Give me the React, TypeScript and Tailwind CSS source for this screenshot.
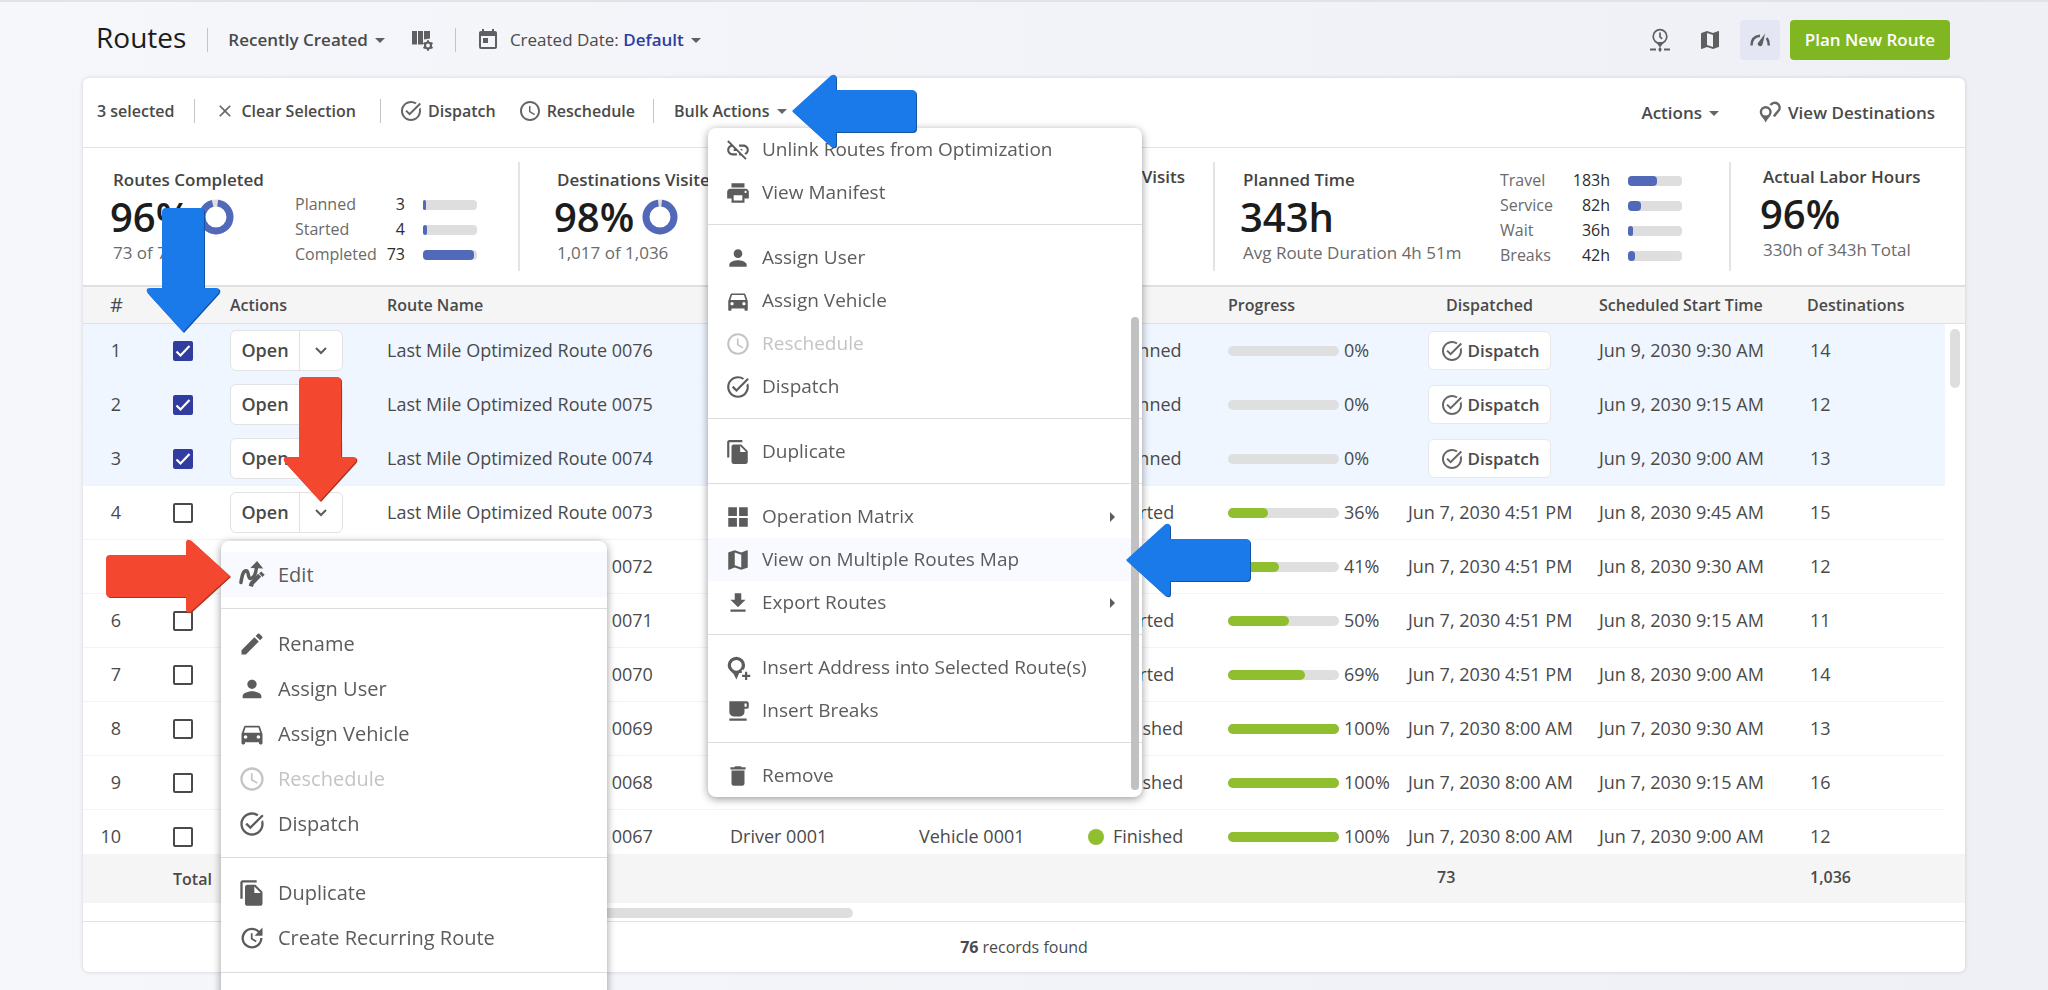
import React from 'react';
import clsx from 'clsx';
import {
  MdAccessTime,
  MdArrowDropDown,
  MdArrowRight,
  MdClose,
  MdDelete,
  MdDirectionsCar,
  MdEdit,
  MdFileCopy,
  MdFileDownload,
  MdFreeBreakfast,
  MdLinkOff,
  MdMap,
  MdPerson,
  MdPrint,
  MdTaskAlt,
  MdToday,
  MdUpdate,
} from 'react-icons/md';

type IconType = React.ComponentType<{ className?: string }>;

const GridIcon: IconType = ({ className }) => (
  <svg viewBox="0 0 24 24" className={className} fill="currentColor">
    <path d="M3 3h8v8H3zM13 3h8v8h-8zM3 13h8v8H3zM13 13h8v8h-8z" />
  </svg>
);

const ColumnsGearIcon: IconType = ({ className }) => (
  <svg viewBox="0 0 24 24" className={className} fill="currentColor">
    <path d="M2 3h5v13.500H2zM8 3h5v13.500H8zM14 3h6v7.500l-6 1z" />
    <circle cx="18" cy="17.500" r="3" fill="none" stroke="currentColor" strokeWidth="2.200" />
    <path
      d="M18 12.300v2M18 20.700v2M13.500 14.900l1.700 1M20.800 19.100l1.700 1M13.500 20.100l1.700-1M20.800 15.900l1.700-1"
      stroke="currentColor"
      strokeWidth="2"
    />
  </svg>
);

const TimelinePinIcon: IconType = ({ className }) => (
  <svg viewBox="0 0 24 24" className={className} fill="none" stroke="currentColor" strokeWidth="1.700">
    <circle cx="12" cy="8.500" r="6.800" />
    <path d="M12 4.500v4.300l2.200 2" />
    <path d="M9.500 14.800L12 18l2.500-3.200z" fill="currentColor" />
    <path d="M2 21.500h6M16 21.500h6M12 19.500v4M10.500 21.500h3" strokeWidth="2" />
  </svg>
);

const GaugeIcon: IconType = ({ className }) => (
  <svg viewBox="0 0 24 24" className={className} fill="none" stroke="currentColor" strokeWidth="2.400">
    <path d="M3.500 17.500c0-5.500 3-9.300 8.500-9.800" />
    <path d="M18.800 10c1.300 2 2 4.500 2 7.500" />
    <path d="M17.200 5.500l-2.700 11a2.400 2.400 0 0 1-4.600-1.500z" fill="currentColor" stroke="none" />
  </svg>
);

const PinsIcon: IconType = ({ className }) => (
  <svg viewBox="0 0 24 24" className={className} fill="currentColor">
    <path
      fillRule="evenodd"
      d="M7.700 5a6 6 0 0 1 6 6c0 3-2.500 5-4.300 7.500l-1.700 3-1.700-3C4.200 16 1.700 14 1.700 11a6 6 0 0 1 6-6zM7.700 7.400a3.600 3.600 0 1 0 0 7.200 3.600 3.600 0 0 0 0-7.200z"
    />
    <path d="M12.500 4.200a4.900 4.900 0 1 1 7.800 5.800c-1.200 1.500-3 3-4.300 5.500" fill="none" stroke="currentColor" strokeWidth="2.400" />
  </svg>
);

const PinPlusIcon: IconType = ({ className }) => (
  <svg viewBox="0 0 24 24" className={className} fill="currentColor">
    <path
      fillRule="evenodd"
      d="M10.500 1.500a8 8 0 0 1 8 8c0 1.600-.5 3-1.300 4.200h-1.700v3h-2.300L10.500 22.500l-2.700-5.300C5 14.800 2.500 13 2.500 9.500a8 8 0 0 1 8-8zM10.500 4.500a5 5 0 1 0 0 10 5 5 0 0 0 0-10z"
    />
    <path d="M19.500 15.500v7.500M15.800 19.200h7.500" stroke="currentColor" strokeWidth="2" />
  </svg>
);

const RouteEditIcon: IconType = ({ className }) => (
  <svg viewBox="0 0 24 24" className={className} fill="none" stroke="currentColor">
    <path
      d="M2.500 18.500C3.500 12 4.500 8.300 7 8.300s1.200 6.700 3.700 6.700c2.800 0 4.500-3.500 5.300-10"
      strokeWidth="3"
      strokeLinecap="round"
    />
    <path d="M11.800 5.500L16.300.8l4.200 5z" fill="currentColor" />
    <path d="M11 21.800l.8-2.700 6.700-6.900" strokeWidth="3.800" />
    <path d="M19.500 12.300l1.900-1.900" strokeWidth="4.200" />
  </svg>
);

interface MenuEntry {
  label: string;
  icon: IconType;
  disabled?: boolean;
  active?: boolean;
  submenu?: boolean;
}

const bulkMenu: MenuEntry[][] = [
  [
    { label: 'Unlink Routes from Optimization', icon: MdLinkOff },
    { label: 'View Manifest', icon: MdPrint },
  ],
  [
    { label: 'Assign User', icon: MdPerson },
    { label: 'Assign Vehicle', icon: MdDirectionsCar },
    { label: 'Reschedule', icon: MdAccessTime, disabled: true },
    { label: 'Dispatch', icon: MdTaskAlt },
  ],
  [{ label: 'Duplicate', icon: MdFileCopy }],
  [
    { label: 'Operation Matrix', icon: GridIcon, submenu: true },
    { label: 'View on Multiple Routes Map', icon: MdMap, active: true },
    { label: 'Export Routes', icon: MdFileDownload, submenu: true },
  ],
  [
    { label: 'Insert Address into Selected Route(s)', icon: PinPlusIcon },
    { label: 'Insert Breaks', icon: MdFreeBreakfast },
  ],
  [{ label: 'Remove', icon: MdDelete }],
];

const rowMenu: MenuEntry[][] = [
  [{ label: 'Edit', icon: RouteEditIcon, active: true }],
  [
    { label: 'Rename', icon: MdEdit },
    { label: 'Assign User', icon: MdPerson },
    { label: 'Assign Vehicle', icon: MdDirectionsCar },
    { label: 'Reschedule', icon: MdAccessTime, disabled: true },
    { label: 'Dispatch', icon: MdTaskAlt },
  ],
  [
    { label: 'Duplicate', icon: MdFileCopy },
    { label: 'Create Recurring Route', icon: MdUpdate },
  ],
];

interface RouteRow {
  id: number;
  name: string;
  status: 'Planned' | 'Started' | 'Finished';
  progress: number;
  bar: number;
  dispatched?: string;
  start: string;
  destinations: number;
}

const routes: RouteRow[] = [
  { id: 1, name: 'Last Mile Optimized Route 0076', status: 'Planned', progress: 0, bar: 0, start: 'Jun 9, 2030 9:30 AM', destinations: 14 },
  { id: 2, name: 'Last Mile Optimized Route 0075', status: 'Planned', progress: 0, bar: 0, start: 'Jun 9, 2030 9:15 AM', destinations: 12 },
  { id: 3, name: 'Last Mile Optimized Route 0074', status: 'Planned', progress: 0, bar: 0, start: 'Jun 9, 2030 9:00 AM', destinations: 13 },
  { id: 4, name: 'Last Mile Optimized Route 0073', status: 'Started', progress: 36, bar: 36, dispatched: 'Jun 7, 2030 4:51 PM', start: 'Jun 8, 2030 9:45 AM', destinations: 15 },
  { id: 5, name: 'Last Mile Optimized Route 0072', status: 'Started', progress: 41, bar: 46, dispatched: 'Jun 7, 2030 4:51 PM', start: 'Jun 8, 2030 9:30 AM', destinations: 12 },
  { id: 6, name: 'Last Mile Optimized Route 0071', status: 'Started', progress: 50, bar: 55, dispatched: 'Jun 7, 2030 4:51 PM', start: 'Jun 8, 2030 9:15 AM', destinations: 11 },
  { id: 7, name: 'Last Mile Optimized Route 0070', status: 'Started', progress: 69, bar: 69, dispatched: 'Jun 7, 2030 4:51 PM', start: 'Jun 8, 2030 9:00 AM', destinations: 14 },
  { id: 8, name: 'Last Mile Optimized Route 0069', status: 'Finished', progress: 100, bar: 100, dispatched: 'Jun 7, 2030 8:00 AM', start: 'Jun 7, 2030 9:30 AM', destinations: 13 },
  { id: 9, name: 'Last Mile Optimized Route 0068', status: 'Finished', progress: 100, bar: 100, dispatched: 'Jun 7, 2030 8:00 AM', start: 'Jun 7, 2030 9:15 AM', destinations: 16 },
  { id: 10, name: 'Last Mile Optimized Route 0067', status: 'Finished', progress: 100, bar: 100, dispatched: 'Jun 7, 2030 8:00 AM', start: 'Jun 7, 2030 9:00 AM', destinations: 12 },
];

const selectedIds = [1, 2, 3];

const Divider: React.FC<{ className?: string }> = ({ className }) => (
  <div className={clsx('w-px h-6 bg-[#c4c4c6]', className)} />
);

const Menu: React.FC<{ groups: MenuEntry[][]; large?: boolean }> = ({ groups, large }) => (
  <div role="menu">
    {groups.map((group, i) => (
      <div
        key={i}
        className={clsx(i > 0 && 'border-t border-[#dcdcdc]', i > 0 && (large ? 'mt-[11px] pt-3' : 'mt-2.5 pt-[11px]'))}
      >
        {group.map(({ label, icon: Icon, disabled, active, submenu }) => (
          <button
            key={label}
            role="menuitem"
            disabled={disabled}
            className={clsx(
              'w-full flex items-center text-left',
              large ? 'h-[45px] pl-[17px] gap-3 text-[20px]' : 'h-[43px] pl-[17px] pr-[18px] gap-[11px] text-[19px]',
              active && 'bg-[#f8faff]',
              disabled ? 'text-[#c4c4c4]' : 'text-[#5c5c5c]'
            )}
          >
            <Icon className={clsx('shrink-0', large ? 'w-7 h-7' : 'w-[26px] h-[26px]')} />
            <span className="flex-1 whitespace-nowrap">{label}</span>
            {submenu && <MdArrowRight className="w-6 h-6" />}
          </button>
        ))}
      </div>
    ))}
  </div>
);

const Donut: React.FC<{ percent: number }> = ({ percent }) => (
  <svg viewBox="0 0 36 36" className="w-9 h-9 -rotate-90">
    <circle cx="18" cy="18" r="14" fill="none" stroke="#dedede" strokeWidth="7" />
    <circle
      cx="18"
      cy="18"
      r="14"
      fill="none"
      stroke="#5268b8"
      strokeWidth="7"
      pathLength={100}
      strokeDasharray={`${percent - 2} 100`}
      strokeDashoffset="-2"
    />
  </svg>
);

interface StatLine {
  label: string;
  value: string;
  percent: number;
}

const StatLines: React.FC<{ lines: StatLine[] }> = ({ lines }) => (
  <dl className="text-[16px] leading-[25px]">
    {lines.map(line => (
      <div key={line.label} className="flex items-center">
        <dt className="w-[82px] text-[#6a6a6a]">{line.label}</dt>
        <dd className="w-7 flex justify-end text-[#2c2c2c]">{line.value}</dd>
        <dd className="ml-[18px] w-[54px] h-2.5 rounded-sm bg-[#dedede]">
          <div className="h-full rounded-sm bg-[#5268b8]" style={{ width: `${line.percent}%` }} />
        </dd>
      </div>
    ))}
  </dl>
);

interface StatProps {
  title: string;
  value: string;
  note: string;
  donut?: number;
}

const Stat: React.FC<StatProps> = ({ title, value, note, donut }) => (
  <div>
    <h2 className="text-[17px] leading-6 font-semibold text-[#444]">{title}</h2>
    <div className="h-[49px] flex items-center gap-2 -ml-[3px]">
      <span className="text-[40px] leading-[48px] font-semibold text-[#1c1c1c]">{value}</span>
      {donut && <Donut percent={donut} />}
    </div>
    <p className="text-[17px] leading-6 text-[#6a6a6a]">{note}</p>
  </div>
);

const Arrow: React.FC<{ color: string; direction: 'left' | 'right' | 'down'; className: string }> = ({
  color,
  direction,
  className,
}) => (
  <svg
    viewBox={direction === 'down' ? '0 0 74 125' : '0 0 125 74'}
    className={clsx('absolute z-20 overflow-visible', direction === 'down' ? 'w-[74px] h-[125px]' : 'w-[125px] h-[74px]', className)}
  >
    {[true, false].map(edge => (
      <g key={String(edge)} transform={edge ? 'translate(1 1)' : undefined}>
        <path
          d="M1 37L40 1.500Q45 -1 45 4V16H121Q125 16 125 20V54Q125 58 121 58H45V70Q45 75 40 72.500Z"
          transform={
            direction === 'right' ? 'translate(125 0) scale(-1 1)' : direction === 'down' ? 'translate(0 125) rotate(-90)' : undefined
          }
          fill={color}
          style={edge ? { filter: 'brightness(0.7)' } : undefined}
        />
      </g>
    ))}
  </svg>
);

const RoutesTable: React.FC = () => (
  <div className="relative">
    <div className="h-[618px] overflow-hidden">
      <table className="w-full table-fixed border-separate border-spacing-0 text-left text-[18px] text-[#4a4a4a]">
        <colgroup>
          <col className="w-[90px]" />
          <col className="w-[57px]" />
          <col className="w-[157px]" />
          <col />
          <col className="w-[189px]" />
          <col className="w-[169px]" />
          <col className="w-[140px]" />
          <col className="w-[180px]" />
          <col className="w-[191px]" />
          <col className="w-[208px]" />
          <col className="w-[138px]" />
          <col className="w-5" />
        </colgroup>
        <thead>
          <tr className="h-[39px] bg-[#f5f5f5] text-[16px] [&>th]:font-semibold [&>th]:border-t-2 [&>th]:border-b [&>th]:border-[#e0e0e0]">
            <th className="pl-[27px]">
              <span className="block text-[20px] leading-6 font-normal">#</span>
            </th>
            <th />
            <th>Actions</th>
            <th>Route Name</th>
            <th>Driver</th>
            <th>Vehicle</th>
            <th>Status</th>
            <th>Progress</th>
            <th className="pr-7 text-center">Dispatched</th>
            <th>Scheduled Start Time</th>
            <th>Destinations</th>
            <th />
          </tr>
        </thead>
        <tbody>
          {routes.map(route => {
            const selected = selectedIds.includes(route.id);
            return (
              <tr
                key={route.id}
                className={clsx(
                  'h-[54px] [&>td:not(:last-child)]:border-b [&>td]:border-[#f3f3f3]',
                  selected && '[&>td:not(:last-child)]:bg-[#eff6ff]'
                )}
              >
                <td className="pr-[52px] text-right">{route.id}</td>
                <td>
                  <input
                    type="checkbox"
                    defaultChecked={selected}
                    aria-label={`Select route ${route.id}`}
                    className="peer block appearance-none w-5 h-5 rounded-xs border-2 border-[#4a4a4a] checked:border-[#303c9f] checked:bg-[#303c9f]"
                  />
                  <svg viewBox="0 0 20 20" className="hidden peer-checked:block w-5 h-5 -mt-5 relative pointer-events-none">
                    <path d="M3.500 10.500l4 4 9-9.500" fill="none" stroke="#fff" strokeWidth="2.200" />
                  </svg>
                </td>
                <td>
                  <div className="w-[113px] h-[41px] flex rounded-md border border-[#e2e2e2] bg-white">
                    <button className="w-[69px] font-semibold border-r border-[#e2e2e2]">Open</button>
                    <button className="flex-1 flex items-center justify-center" aria-label="More actions">
                      <svg viewBox="0 0 12 8" className="w-3 h-2">
                        <path d="M1 1l5 5 5-5" fill="none" stroke="#5c5c5c" strokeWidth="2" />
                      </svg>
                    </button>
                  </div>
                </td>
                <td className="whitespace-nowrap">{route.name}</td>
                <td>Driver 0001</td>
                <td>Vehicle 0001</td>
                <td>
                  <span className="flex items-center gap-[9px]">
                    <span
                      className={clsx('w-4 h-4 rounded-full', route.status === 'Finished' ? 'bg-[#8fbe2e]' : 'bg-[#5268b8]')}
                    />
                    {route.status}
                  </span>
                </td>
                <td>
                  <div className="flex items-center gap-[5px]">
                    <div className="w-[111px] h-2.5 rounded-full bg-[#dfdfdf]">
                      <div className="h-full rounded-full bg-[#8fbe2e]" style={{ width: `${route.bar}%` }} />
                    </div>
                    <span>{route.progress}%</span>
                  </div>
                </td>
                <td className="pr-7 text-center whitespace-nowrap">
                  {route.dispatched ?? (
                    <button className="h-[39px] px-[11px] inline-flex items-center gap-1 align-middle rounded-md border border-[#e8e8e8] bg-white text-[17px] font-semibold">
                      <MdTaskAlt className="w-6 h-6 text-[#666]" />
                      Dispatch
                    </button>
                  )}
                </td>
                <td>{route.start}</td>
                <td className="pl-[3px]">{route.destinations}</td>
                <td />
              </tr>
            );
          })}
        </tbody>
        <tfoot className="sticky bottom-0 z-1">
          <tr className="h-[49px] bg-[#f5f5f5] text-[16px] font-semibold">
            <td />
            <td colSpan={7}>Total</td>
            <td className="pl-[29px] pb-1">73</td>
            <td />
            <td className="pl-[3px] pb-1">1,036</td>
            <td />
          </tr>
        </tfoot>
      </table>
    </div>
    <div className="absolute right-[5px] top-[44px] w-2.5 h-[59px] rounded-full bg-[#dedede]" />
  </div>
);

const App: React.FC = () => {
  return (
    <div
      className="relative h-screen overflow-hidden px-[83px] border-t-2 border-[#e2e3e7] bg-linear-to-r from-[#f6f7fb] to-[#eff0f6] text-[17px] text-[#4a4a4a]"
      style={{ fontFamily: '"Open Sans", "Noto Sans", sans-serif' }}
    >
      <header className="h-[76px] flex items-center pl-[13px] pr-[15px] [&_svg]:text-[#5f5f62]">
        <h1 className="pb-1.5 text-[28px] leading-8 text-[#1c1c1c]">Routes</h1>
        <Divider className="ml-[21px]" />
        <button className="ml-5 flex items-center font-semibold">
          Recently Created
          <MdArrowDropDown className="w-6 h-6" />
        </button>
        <button className="ml-[18px]" aria-label="Configure columns">
          <ColumnsGearIcon className="w-6 h-6" />
        </button>
        <Divider className="ml-[21px]" />
        <MdToday className="ml-5 w-6 h-6" />
        <button className="ml-2.5 flex items-center">
          Created Date:&nbsp;<span className="font-semibold text-[#303c9f]">Default</span>
          <MdArrowDropDown className="w-6 h-6" />
        </button>
        <div className="ml-auto flex items-center">
          <button className="w-10 h-10 mr-2.5 flex items-center justify-center" aria-label="Timeline">
            <TimelinePinIcon className="w-6 h-6" />
          </button>
          <button className="w-10 h-10 mr-2.5 flex items-center justify-center" aria-label="Map">
            <MdMap className="w-6 h-6" />
          </button>
          <button className="w-10 h-10 mr-2.5 flex items-center justify-center rounded-sm bg-[#e5e6f3]" aria-label="Dashboard">
            <GaugeIcon className="w-6 h-6" />
          </button>
          <button className="h-10 px-[15px] rounded-sm bg-[#80b622] text-white font-semibold">Plan New Route</button>
        </div>
      </header>

      <main className="rounded-md bg-white shadow-[0_0_4px_rgba(0,0,0,0.15)]">
        <div className="h-[70px] flex items-center pl-[14px] pr-[30px] pb-1 border-b border-[#e2e2e2] text-[16px] font-semibold [&_svg]:text-[#666]">
          <span>3 selected</span>
          <Divider className="ml-5" />
          <button className="ml-5 flex items-center gap-1.5">
            <MdClose className="w-5 h-5" />
            Clear Selection
          </button>
          <Divider className="ml-6" />
          <button className="ml-[18px] flex items-center gap-[5px]">
            <MdTaskAlt className="w-6 h-6" />
            Dispatch
          </button>
          <button className="ml-[22px] flex items-center gap-[5px]">
            <MdAccessTime className="w-6 h-6" />
            Reschedule
          </button>
          <Divider className="ml-[18px]" />
          <button className="ml-5 flex items-center">
            Bulk Actions
            <MdArrowDropDown className="w-6 h-6" />
          </button>
          <button className="ml-auto mt-1 flex items-center text-[17px]">
            Actions
            <MdArrowDropDown className="w-6 h-6" />
          </button>
          <button className="ml-8 mt-1 flex items-center gap-1.5 text-[17px]">
            <PinsIcon className="w-6 h-6" />
            View Destinations
          </button>
        </div>

        <section className="h-[137px] py-[14px] grid grid-cols-[435px_1fr_1fr_516px_236px] [&>div:not(:first-child)]:border-l-2 [&>div]:border-[#e4e4e4]">
          <div className="pl-[30px] pt-[6px] pr-[41px] flex justify-between">
            <Stat title="Routes Completed" value="96%" note="73 of 76" donut={96} />
            <div className="pt-6">
              <StatLines
                lines={[
                  { label: 'Planned', value: '3', percent: 5 },
                  { label: 'Started', value: '4', percent: 7 },
                  { label: 'Completed', value: '73', percent: 95 },
                ]}
              />
            </div>
          </div>
          <div className="pl-[37px] pt-[6px]">
            <Stat title="Destinations Visited" value="98%" note="1,017 of 1,036" donut={98} />
          </div>
          <div className="pr-7 pt-[3px] flex justify-end">
            <h2 className="text-[17px] leading-6 font-semibold text-[#444]">Visits</h2>
          </div>
          <div className="pl-7 pt-[6px] pr-[47px] flex justify-between">
            <Stat title="Planned Time" value="343h" note="Avg Route Duration 4h 51m" />
            <StatLines
              lines={[
                { label: 'Travel', value: '183h', percent: 53 },
                { label: 'Service', value: '82h', percent: 24 },
                { label: 'Wait', value: '36h', percent: 10 },
                { label: 'Breaks', value: '42h', percent: 13 },
              ]}
            />
          </div>
          <div className="pl-8 pt-[3px]">
            <Stat title="Actual Labor Hours" value="96%" note="330h of 343h Total" />
          </div>
        </section>

        <RoutesTable />

        <div className="h-[19px] pt-[5px] border-b border-[#e2e2e2]">
          <div className="ml-[320px] w-[450px] h-2.5 rounded-full bg-[#dedede]" />
        </div>
        <p className="h-[50px] flex items-center justify-center gap-1 text-[16px]">
          <b className="font-bold">76</b> records found
        </p>
      </main>

      <div className="absolute z-10 left-[708px] top-[126px] w-[434px] h-[669px] overflow-hidden rounded-lg bg-white shadow-[0_2px_8px_rgba(0,0,0,0.4)]">
        <Menu groups={bulkMenu} />
        <div className="absolute right-[3px] top-[189px] w-2 h-[473px] rounded-full bg-[#c1c1c1]" />
      </div>

      <div className="absolute z-10 left-[221px] top-[539px] w-[386px] pt-[11px] rounded-t-lg bg-white shadow-[0_2px_8px_rgba(0,0,0,0.4)]">
        <Menu groups={rowMenu} large />
        <div className="mt-3 h-16 border-t border-[#dcdcdc]" />
      </div>

      <Arrow color="#1b7aea" direction="left" className="left-[791px] top-[72px]" />
      <Arrow color="#1b7aea" direction="down" className="left-[146px] top-[206px]" />
      <Arrow color="#1b7aea" direction="left" className="left-[1125px] top-[521px]" />
      <Arrow color="#f3472f" direction="down" className="left-[283px] top-[375px]" />
      <Arrow color="#f3472f" direction="right" className="left-[106px] top-[537px]" />
    </div>
  );
};

export default App;
